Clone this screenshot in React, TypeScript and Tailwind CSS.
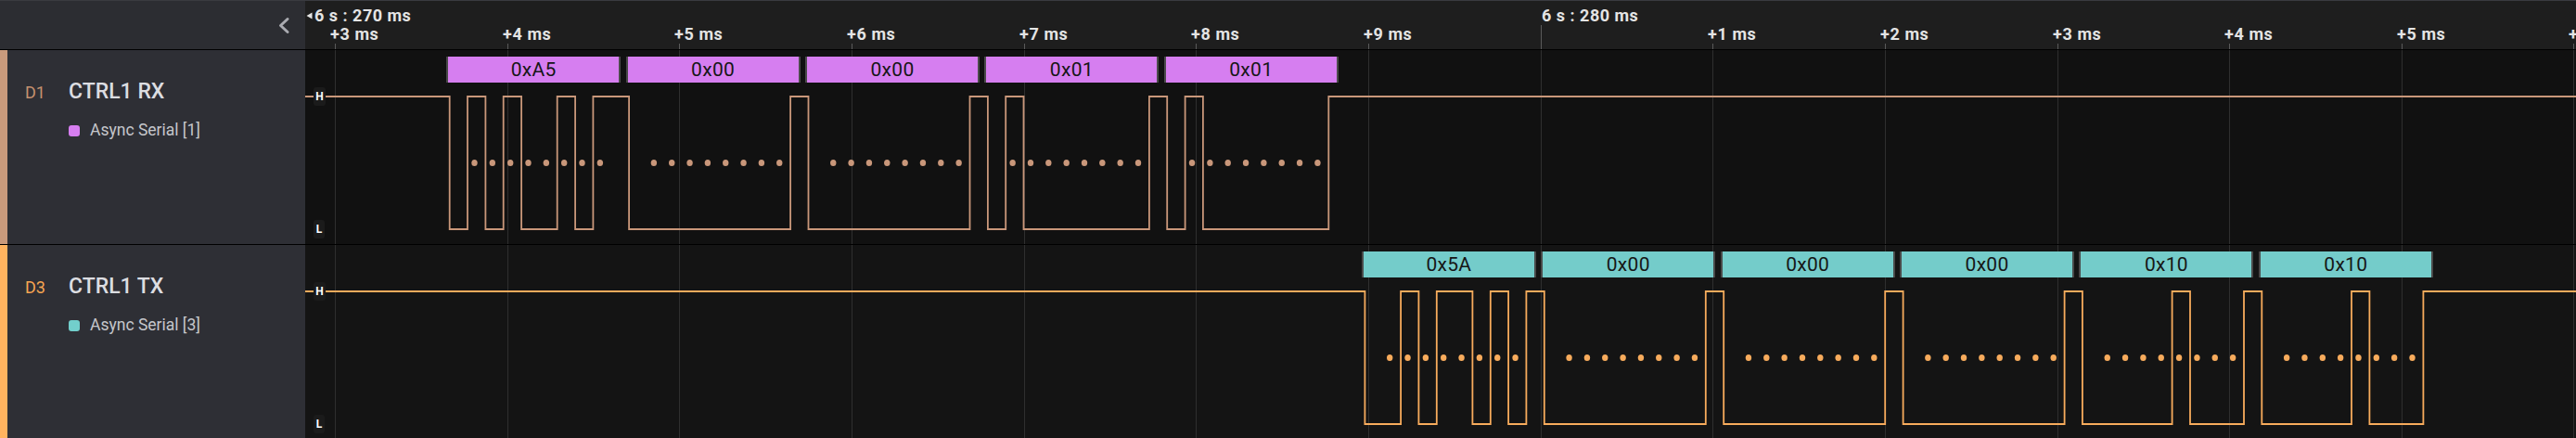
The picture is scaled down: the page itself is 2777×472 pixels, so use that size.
import React from 'react'

const AREA_W = 2448
const MS = 185.65
const BIT = MS / 9.6
const TICK0 = 32
const ROW_H = 209
const HI = 50
const LO = 193
const MID = 121.5

type Channel = {
  tag: string
  name: string
  decoder: string
  accent: string
  tagColor: string
  swatch: string
  bubble: string
  rowBg: string
  line: string
  start: number
  bytes: number[]
}

const channels: Channel[] = [
  {
    tag: 'D1',
    name: 'CTRL1 RX',
    decoder: 'Async Serial [1]',
    accent: 'bg-[#c99a7c]',
    tagColor: 'text-[#c4916f]',
    swatch: 'bg-[#d67ef0]',
    bubble: 'bg-[#d67ef0]',
    rowBg: 'bg-[#111111]',
    line: '#c9977a',
    start: 155.7,
    bytes: [0xa5, 0x00, 0x00, 0x01, 0x01],
  },
  {
    tag: 'D3',
    name: 'CTRL1 TX',
    decoder: 'Async Serial [3]',
    accent: 'bg-[#ffb35f]',
    tagColor: 'text-[#f5a552]',
    swatch: 'bg-[#72cfcc]',
    bubble: 'bg-[#74ccca]',
    rowBg: 'bg-[#141414]',
    line: '#f7ab5c',
    start: 1142.4,
    bytes: [0x5a, 0x00, 0x00, 0x00, 0x10, 0x10],
  },
]

const ticks = [
  '+3 ms', '+4 ms', '+5 ms', '+6 ms', '+7 ms', '+8 ms', '+9 ms',
  null,
  '+1 ms', '+2 ms', '+3 ms', '+4 ms', '+5 ms', '+6 ms',
]

const hex = (b: number) => '0x' + b.toString(16).toUpperCase().padStart(2, '0')

function wavePath(start: number, bytes: number[]) {
  const bits: number[] = []
  for (const b of bytes) {
    bits.push(0)
    for (let i = 0; i < 8; i++) bits.push((b >> i) & 1)
    bits.push(1)
  }
  let d = `M0 ${HI}`
  let level = 1
  bits.forEach((v, i) => {
    if (v !== level) {
      const x = start + i * BIT
      d += ` H${x.toFixed(1)} V${v ? HI : LO}`
      level = v
    }
  })
  return d + ` H${AREA_W}`
}

function Waveform({ ch }: { ch: Channel }) {
  const dots: number[] = []
  ch.bytes.forEach((_, j) => {
    for (let i = 0; i < 8; i++) dots.push(ch.start + j * 10 * BIT + 26.8 + i * BIT)
  })
  return (
    <div className={`relative flex-1 overflow-hidden ${ch.rowBg}`}>
      <svg className="absolute left-0 top-0" width={AREA_W} height={ROW_H}>
        {ticks.map((_, k) => (
          <rect key={k} x={Math.round(TICK0 + k * MS)} y={0} width={1} height={ROW_H} fill="#2f2f2f" />
        ))}
        <path d={wavePath(ch.start, ch.bytes)} fill="none" stroke={ch.line} strokeWidth={1.8} />
        {dots.map((x, i) => (
          <ellipse key={i} cx={x} cy={MID} rx={3.2} ry={3.6} fill={ch.line} />
        ))}
      </svg>

      {ch.bytes.map((b, j) => (
        <div
          key={j}
          className={`absolute top-[7px] flex h-[28px] w-[188px] items-center justify-center border-x-2 border-[#4a4a4a] text-[21px] leading-none tracking-[0.3px] text-[#161616] ${ch.bubble}`}
          style={{ left: ch.start + j * 10 * BIT - 3.5 }}
        >
          {hex(b)}
        </div>
      ))}

      <div className="absolute left-[9px] top-[40px] flex h-[20px] w-[13px] items-center justify-center rounded-[3px] bg-[#1b1b1b] text-[12px] font-bold leading-none text-white">
        H
      </div>
      <div className="absolute left-[9px] top-[183px] flex h-[20px] w-[12px] items-center justify-center rounded-[3px] bg-[#1b1b1b] text-[12px] font-bold leading-none text-white">
        L
      </div>
    </div>
  )
}

function ChannelLabel({ ch }: { ch: Channel }) {
  return (
    <div className="flex w-[329px] shrink-0 bg-[#2e2f35]">
      <div className={`w-2 shrink-0 ${ch.accent}`} />
      <div className="flex flex-col pl-[19px] pt-[33px]">
        <div className="flex items-baseline">
          <span className={`w-[47px] text-[18px] leading-none ${ch.tagColor}`}>{ch.tag}</span>
          <span className="text-[23px] font-medium leading-none text-[#dcdde1]">{ch.name}</span>
        </div>
        <div className="ml-[47px] mt-[22px] flex items-center gap-[11px]">
          <span className={`h-[12px] w-[12px] rounded-[3px] ${ch.swatch}`} />
          <span className="text-[17.5px] leading-none text-[#c5c6cb]">{ch.decoder}</span>
        </div>
      </div>
    </div>
  )
}

export default function App() {
  return (
    <div className="flex h-[472px] w-[2777px] flex-col overflow-hidden bg-[#111111] font-['Roboto','Liberation_Sans',sans-serif]">
      {/* time ruler */}
      <div className="flex h-[54px] shrink-0 border-y border-t-[#3a3b40] border-b-black">
        <div className="flex w-[329px] shrink-0 items-start justify-end bg-[#2c2d32] pr-[16px] pt-[17px]">
          <svg width="14" height="19" viewBox="0 0 14 19">
            <polyline points="11,2.5 3.5,9.5 11,16.5" fill="none" stroke="#a9aab0" strokeWidth="3" strokeLinecap="round" strokeLinejoin="round" />
          </svg>
        </div>
        <div className="relative flex-1 overflow-hidden bg-[#1e1e1e]">
          <svg className="absolute left-[1px] top-[12px]" width="7" height="8" viewBox="0 0 7 8">
            <polygon points="6.5,0.5 0.5,4 6.5,7.5" fill="#e4e4e4" />
          </svg>
          <span className="absolute left-[10px] top-[7px] whitespace-nowrap text-[18px] font-bold leading-none tracking-[0.5px] text-[#e4e4e4]">
            6 s : 270 ms
          </span>
          {ticks.map((label, k) => {
            const x = Math.round(TICK0 + k * MS)
            return label ? (
              <React.Fragment key={k}>
                <div className="absolute bottom-0 h-[6px] w-px bg-[#5a5a5a]" style={{ left: x }} />
                <span
                  className="absolute top-[27px] whitespace-nowrap text-[18px] font-bold leading-none tracking-[0.6px] text-[#e4e4e4]"
                  style={{ left: x - 5 }}
                >
                  {label}
                </span>
              </React.Fragment>
            ) : (
              <React.Fragment key={k}>
                <div className="absolute bottom-0 h-[26px] w-px bg-[#5a5a5a]" style={{ left: x }} />
                <span
                  className="absolute top-[7px] whitespace-nowrap text-[18px] font-bold leading-none tracking-[0.5px] text-[#e4e4e4]"
                  style={{ left: x + 1 }}
                >
                  6 s : 280 ms
                </span>
              </React.Fragment>
            )
          })}
        </div>
      </div>

      {/* channel rows */}
      {channels.map((ch, i) => (
        <div key={ch.tag} className={`flex shrink-0 ${i === 0 ? 'h-[210px] border-b border-black' : 'h-[208px]'}`}>
          <ChannelLabel ch={ch} />
          <Waveform ch={ch} />
        </div>
      ))}
    </div>
  )
}
